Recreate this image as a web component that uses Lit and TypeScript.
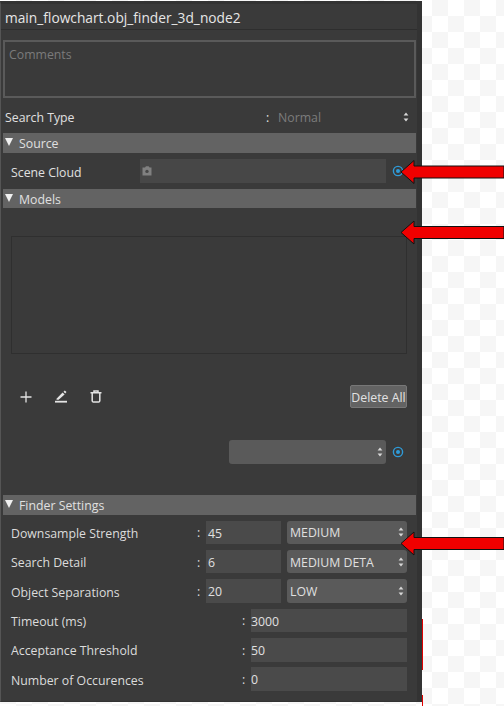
import { LitElement, html, css, svg } from "lit";
import { customElement } from "lit/decorators.js";

const updown = html`<svg class="updown" width="6" height="10" viewBox="0 0 6 10"><path d="M3 0.5 5.4 3.6H.6Z M3 9.5 5.4 6.4H.6Z" fill="#d8d8d8"/></svg>`;
const target = html`<svg class="target" width="12" height="12" viewBox="0 0 12 12"><circle cx="6" cy="6" r="4.6" fill="none" stroke="#2f9bd8" stroke-width="1.4"/><circle cx="6" cy="6" r="2" fill="#2f9bd8"/></svg>`;
const tri = html`<svg class="tri" width="8" height="8" viewBox="0 0 8 8"><path d="M0 0H8L4 8Z" fill="#f0f0f0"/></svg>`;

const arrow = (y: number) => svg`<path d="M401 ${y} 414 ${y - 11.5}V${y - 6}H504V${y + 6}H414V${y + 11.5}Z" fill="#f00000" stroke="#111" stroke-width="1"/>`;

@customElement("app-root")
export class AppRoot extends LitElement {
  static styles = css`
    :host {
      display: block;
      position: relative;
      width: 504px;
      height: 706px;
      overflow: hidden;
      background-color: #fff;
      background-image: conic-gradient(#f6f6f6 25%, #fff 0 50%, #f6f6f6 0 75%, #fff 0);
      background-size: 32px 32px;
      background-position: 0 0;
      font-family: "Open Sans", "Noto Sans", sans-serif;
      font-size: 12.3px;
      color: #dcdcdc;
    }
    .panel {
      box-sizing: border-box;
      width: 422px;
      height: 701px;
      margin-top: 1px;
      background: #3a3a3a;
      border-left: 1px solid #555;
      border-top: 3px solid #333;
      border-right: 5px solid #333;
      border-bottom: 1px solid #333;
      padding: 0 0 0 2px;
      display: flex;
      flex-direction: column;
    }
    .title {
      height: 26px;
      flex: none;
      box-sizing: border-box;
      padding: 1px 0 0 4px;
      font-size: 13.75px;
      line-height: 25px;
      color: #e6e6e6;
      margin-left: -2px;
      border-bottom: 1px solid #2e2e2e;
    }
    .comments {
      box-sizing: border-box;
      margin-top: 10px;
      height: 58px;
      flex: none;
      border: 2px solid #5a5a5a;
      background: #3a3a3a;
      color: #7a7a7a;
      padding: 4px 4px;
      line-height: 18px;
      margin-right: 1px;
    }
    .search {
      margin-top: 8px;
      height: 22px;
      flex: none;
      display: flex;
      align-items: center;
      padding-right: 8px;
      padding-left: 2px;
      color: #e0e0e0;
    }
    .search .lbl { width: 261px; }
    .search .colon { width: 12px; }
    .search .val { flex: 1; color: #7c7c7c; }
    .section {
      height: 19.5px;
      flex: none;
      background: #636363;
      display: flex;
      align-items: center;
      gap: 6px;
      padding-left: 2px;
      margin-right: 1px;
      color: #e0e0e0;
      box-sizing: border-box;
    }
    .section span { padding-top: 2px; }
    .tri { flex: none; margin-top: -1px; }
    .s-source { margin-top: 5px; }
    .scene {
      margin-top: 6px;
      height: 24px;
      flex: none;
      display: flex;
      align-items: center;
      padding-left: 8px;
    }
    .scene .lbl { width: 129px; flex: none; padding-top: 3px; color: #e0e0e0; }
    .inputwide {
      width: 246px;
      height: 100%;
      background: #474747;
      display: flex;
      align-items: center;
      padding-left: 1px;
      box-sizing: border-box;
      flex: none;
    }
    .target { margin-left: 6px; flex: none; }
    .s-models { margin-top: 6px; }
    .list {
      margin: 27.5px 0 0 8px;
      width: 396px;
      height: 118px;
      flex: none;
      box-sizing: border-box;
      border: 1px solid #2f2f2f;
      background: #3a3a3a;
    }
    .tools {
      margin-top: 31px;
      margin-left: 17px;
      width: 387px;
      height: 24px;
      flex: none;
      display: flex;
      align-items: center;
      gap: 23px;
    }
    .tools svg { flex: none; }
    .del {
      margin-left: auto;
      width: 57px;
      height: 23px;
      box-sizing: border-box;
      border: 1px solid #777;
      border-radius: 2px;
      background: #636363;
      color: #e2e2e2;
      font: inherit;
      padding: 1px 0 0;
      line-height: 19px;
    }
    .picker {
      margin-top: 31.5px;
      margin-left: 226px;
      height: 23.5px;
      flex: none;
      display: flex;
      align-items: center;
    }
    .sel {
      box-sizing: border-box;
      background: #5a5a5a;
      border-radius: 3px;
      display: flex;
      align-items: center;
      justify-content: space-between;
      padding: 0 3px;
      height: 23.5px;
      color: #e0e0e0;
      flex: none;
    }
    .sel span { padding-top: 1px; }
    .picker .sel { width: 157px; }
    .s-finder { margin-top: 31.5px; }
    .rows {
      margin: 6px 0 0 8px;
      display: flex;
      flex-direction: column;
      gap: 5.9px;
      width: 396px;
    }
    .row { display: flex; align-items: center; height: 23.5px; }
    .row .lbl { flex: 1; color: #dcdcdc; padding-top: 2px; }
    .colon { flex: none; }
    .row .colon { width: 9px; padding-top: 1px; }
    .num {
      box-sizing: border-box;
      background: #4a4a4a;
      height: 23.5px;
      line-height: 25px;
      padding-left: 2px;
      color: #e0e0e0;
      flex: none;
    }
    .row .num.short { width: 75px; margin-right: 6px; }
    .row .sel { width: 120px; }
    .row .num.long { width: 156px; padding-left: 0; }
    .overlay { position: absolute; inset: 0; pointer-events: none; }
    .mark { position: absolute; left: 422px; width: 1px; background: #e00000; }
    .m1 { top: 619px; height: 51px; }
    .m2 { top: 695px; height: 11px; }
  `;

  private row(label: string, val: string, sel: string) {
    return html`<div class="row"><span class="lbl">${label}</span><span class="colon">:</span><div class="num short">${val}</div><div class="sel"><span>${sel}</span>${updown}</div></div>`;
  }
  private row2(label: string, val: string) {
    return html`<div class="row"><span class="lbl">${label}</span><span class="colon">:</span><div class="num long">${val}</div></div>`;
  }

  render() {
    return html`
      <div class="panel">
        <div class="title">main_flowchart.obj_finder_3d_node2</div>
        <div class="comments">Comments</div>
        <div class="search"><span class="lbl">Search Type</span><span class="colon">:</span><span class="val">Normal</span>${updown}</div>
        <div class="section s-source">${tri}<span>Source</span></div>
        <div class="scene">
          <span class="lbl">Scene Cloud</span>
          <div class="inputwide"><svg width="12" height="10" viewBox="0 0 12 10"><path d="M1.5 1.5H4L5 .3H7.6L8.6 1.5H10.5V9.5H1.5Z" fill="#808080"/><circle cx="6" cy="5.4" r="1.7" fill="#474747"/></svg></div>
          ${target}
        </div>
        <div class="section s-models">${tri}<span>Models</span></div>
        <div class="list"></div>
        <div class="tools">
          <svg width="12" height="12" viewBox="0 0 12 12"><path d="M6 .5V11.5M.5 6H11.5" stroke="#e4e4e4" stroke-width="1.3" fill="none"/></svg>
          <svg width="12" height="13" viewBox="0 0 12 13"><path d="M0 11.7H12" stroke="#e4e4e4" stroke-width="1.8"/><path d="M1.5 8.8 7.6 2.6 9.6 4.4 3.6 9.8H1.5Z" fill="#e4e4e4"/><path d="M8.5 1.8 9.8 .4 11.5 2 10.2 3.4Z" fill="#e4e4e4"/></svg>
          <svg width="12" height="13" viewBox="0 0 12 13"><path d="M.5 2.8H11.5M4 2.5V1H8V2.5M2.2 3V11A1.2 1.2 0 0 0 3.4 12H8.6A1.2 1.2 0 0 0 9.8 11V3" stroke="#e4e4e4" stroke-width="1.5" fill="none"/></svg>
          <button class="del">Delete All</button>
        </div>
        <div class="picker"><div class="sel"><span></span>${updown}</div>${target}</div>
        <div class="section s-finder">${tri}<span>Finder Settings</span></div>
        <div class="rows">
          ${this.row("Downsample Strength", "45", "MEDIUM")}
          ${this.row("Search Detail", "6", "MEDIUM DETA")}
          ${this.row("Object Separations", "20", "LOW")}
          ${this.row2("Timeout (ms)", "3000")}
          ${this.row2("Acceptance Threshold", "50")}
          ${this.row2("Number of Occurences", "0")}
        </div>
      </div>
      <div class="overlay">
        <svg width="504" height="706" viewBox="0 0 504 706">${arrow(172)}${arrow(232.5)}${arrow(543.5)}</svg>
        <div class="mark m1"></div>
        <div class="mark m2"></div>
      </div>
    `;
  }
}
